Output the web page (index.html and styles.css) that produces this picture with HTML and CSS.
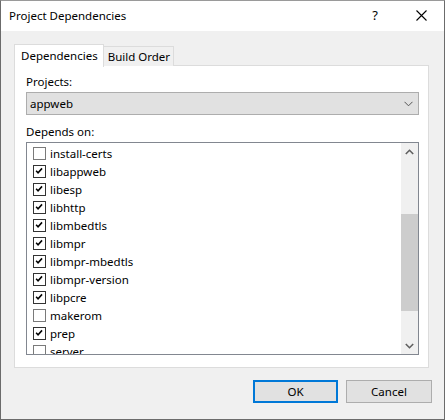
FILE: index.html
```html
<!DOCTYPE html>
<html>
<head>
<meta charset="utf-8">
<link rel="stylesheet" href="styles.css">
</head>
<body>
<div class="window">
  <div class="titlebar">
    <span class="title">Project Dependencies</span>
    <span class="tb-help">?</span>
    <span class="tb-close">
      <svg width="11" height="11" viewBox="0 0 11 11"><path d="M0.5 0.5 L10.5 10.5 M10.5 0.5 L0.5 10.5" stroke="#000" stroke-width="1.1" fill="none"/></svg>
    </span>
  </div>
  <div class="client">
    <div class="tabs">
      <div class="tab active">Dependencies</div>
      <div class="tab">Build Order</div>
    </div>
    <div class="panel">
      <div class="label">Projects:</div>
      <div class="combo">
        <span>appweb</span>
        <svg class="chev" width="9" height="6" viewBox="0 0 9 6"><path d="M0.5 0.8 L4.5 4.8 L8.5 0.8" stroke="#555" stroke-width="1" fill="none"/></svg>
      </div>
      <div class="label label2">Depends on:</div>
      <div class="listbox">
        <div class="items">
          <div class="item"><span class="cb"></span>install-certs</div>
          <div class="item"><span class="cb on"><svg viewBox="0 0 13 13" width="11" height="11"><path d="M2.5 5.5 L4.8 8 L9.5 2.8" stroke="#000" stroke-width="1.8" fill="none"/></svg></span>libappweb</div>
          <div class="item"><span class="cb on"><svg viewBox="0 0 13 13" width="11" height="11"><path d="M2.5 5.5 L4.8 8 L9.5 2.8" stroke="#000" stroke-width="1.8" fill="none"/></svg></span>libesp</div>
          <div class="item"><span class="cb on"><svg viewBox="0 0 13 13" width="11" height="11"><path d="M2.5 5.5 L4.8 8 L9.5 2.8" stroke="#000" stroke-width="1.8" fill="none"/></svg></span>libhttp</div>
          <div class="item"><span class="cb on"><svg viewBox="0 0 13 13" width="11" height="11"><path d="M2.5 5.5 L4.8 8 L9.5 2.8" stroke="#000" stroke-width="1.8" fill="none"/></svg></span>libmbedtls</div>
          <div class="item"><span class="cb on"><svg viewBox="0 0 13 13" width="11" height="11"><path d="M2.5 5.5 L4.8 8 L9.5 2.8" stroke="#000" stroke-width="1.8" fill="none"/></svg></span>libmpr</div>
          <div class="item"><span class="cb on"><svg viewBox="0 0 13 13" width="11" height="11"><path d="M2.5 5.5 L4.8 8 L9.5 2.8" stroke="#000" stroke-width="1.8" fill="none"/></svg></span>libmpr-mbedtls</div>
          <div class="item"><span class="cb on"><svg viewBox="0 0 13 13" width="11" height="11"><path d="M2.5 5.5 L4.8 8 L9.5 2.8" stroke="#000" stroke-width="1.8" fill="none"/></svg></span>libmpr-version</div>
          <div class="item"><span class="cb on"><svg viewBox="0 0 13 13" width="11" height="11"><path d="M2.5 5.5 L4.8 8 L9.5 2.8" stroke="#000" stroke-width="1.8" fill="none"/></svg></span>libpcre</div>
          <div class="item"><span class="cb"></span>makerom</div>
          <div class="item"><span class="cb on"><svg viewBox="0 0 13 13" width="11" height="11"><path d="M2.5 5.5 L4.8 8 L9.5 2.8" stroke="#000" stroke-width="1.8" fill="none"/></svg></span>prep</div>
          <div class="item"><span class="cb"></span>server</div>
        </div>
        <div class="scrollbar">
          <div class="sb-arrow">
            <svg width="9" height="6" viewBox="0 0 9 6"><path d="M0.8 5 L4.5 1.3 L8.2 5" stroke="#606060" stroke-width="1.6" fill="none"/></svg>
          </div>
          <div class="sb-track">
            <div class="sb-thumb"></div>
          </div>
          <div class="sb-arrow">
            <svg width="9" height="6" viewBox="0 0 9 6"><path d="M0.8 1 L4.5 4.7 L8.2 1" stroke="#606060" stroke-width="1.6" fill="none"/></svg>
          </div>
        </div>
      </div>
    </div>
    <div class="buttons">
      <div class="btn default">OK</div>
      <div class="btn">Cancel</div>
    </div>
  </div>
</div>
</body>
</html>
```

FILE: styles.css
```css
html, body {
  margin: 0;
  padding: 0;
  background: #ffffff;
}

body {
  font-family: "Noto Sans", "Segoe UI", sans-serif;
  font-size: 11.5px;
  color: #000;
}

.window {
  width: 445px;
  height: 420px;
  box-sizing: border-box;
  border: 1px solid #6b6b6b;
  border-top-color: #9a9a9a;
  display: flex;
  flex-direction: column;
  overflow: hidden;
}

.titlebar {
  height: 30px;
  background: #ffffff;
  display: flex;
  align-items: center;
  flex: none;
}

.title {
  padding-left: 8px;
  flex: 1;
  font-size: 11.5px;
  margin-top: -2px;
}

.tb-help {
  width: 46px;
  text-align: center;
  font-size: 13px;
  margin-top: -2px;
}

.tb-close {
  width: 46px;
  display: flex;
  justify-content: center;
  margin-top: -1px;
}

.client {
  flex: 1;
  background: #f0f0f0;
  padding: 13px 0 0 13px;
  display: flex;
  flex-direction: column;
}

.tabs {
  display: flex;
  align-items: flex-end;
  height: 22px;
  position: relative;
  z-index: 1;
  margin-bottom: -1px;
}

.tab {
  border: 1px solid #dcdcdc;
  border-bottom: none;
  background: #f0f0f0;
  height: 20px;
  line-height: 19px;
  padding: 0 6px;
  box-sizing: border-box;
}

.tab.active {
  background: #ffffff;
  height: 23px;
  line-height: 21px;
  padding: 0 5px 0 6px;
  margin-bottom: -1px;
}

.tab + .tab {
  border-left: none;
  padding: 0 3px 0 4px;
}

.panel {
  width: 415px;
  height: 303px;
  box-sizing: border-box;
  background: #ffffff;
  border: 1px solid #dcdcdc;
  padding: 7px 9px 0 11px;
  display: flex;
  flex-direction: column;
}

.label {
  height: 17px;
  line-height: 17px;
  margin-bottom: 2px;
}

.label2 {
  margin-top: 8px;
  margin-bottom: 2px;
}

.combo {
  width: 393px;
  height: 23px;
  box-sizing: border-box;
  background: #e1e1e1;
  border: 1px solid #adadad;
  display: flex;
  align-items: center;
  justify-content: space-between;
  padding: 0 4px 0 3px;
}

.combo span {
  margin-top: -1px;
}

.chev {
  margin-right: 1px;
}

.listbox {
  width: 393px;
  height: 213px;
  box-sizing: border-box;
  border: 1px solid #828790;
  display: flex;
  overflow: hidden;
}

.items {
  flex: 1;
  padding-top: 1px;
  overflow: hidden;
}

.item {
  height: 18px;
  display: flex;
  align-items: center;
  padding-left: 6px;
}

.cb {
  width: 13px;
  height: 13px;
  box-sizing: border-box;
  border: 1px solid #7a7a7a;
  background: #fff;
  margin-right: 4px;
  display: flex;
  align-items: center;
  justify-content: center;
  flex: none;
}

.cb.on {
  border-color: #333333;
}

.scrollbar {
  width: 17px;
  background: #f0f0f0;
  display: flex;
  flex-direction: column;
  flex: none;
}

.sb-arrow {
  height: 17px;
  display: flex;
  align-items: center;
  justify-content: center;
  flex: none;
}

.sb-track {
  flex: 1;
  padding-top: 54px;
}

.sb-thumb {
  height: 97px;
  background: #cdcdcd;
}

.buttons {
  display: flex;
  justify-content: flex-end;
  gap: 8px;
  padding: 12px 12px 0 0;
}

.btn {
  width: 86px;
  height: 23px;
  box-sizing: border-box;
  border: 1px solid #adadad;
  background: #e1e1e1;
  display: flex;
  align-items: center;
  justify-content: center;
}

.btn.default {
  width: 85px;
  border: 2px solid #0078d7;
}
```
